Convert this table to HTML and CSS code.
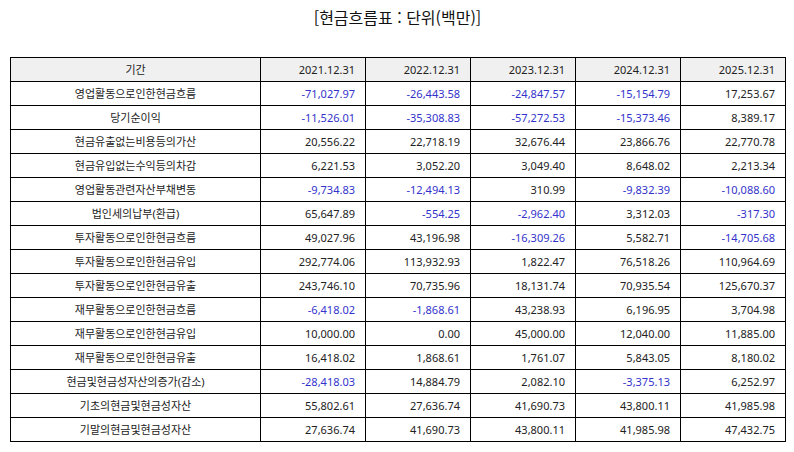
FILE: index.html
```html
<!DOCTYPE html>
<html lang="ko">
<head>
<meta charset="utf-8">
<title>현금흐름표</title>
<link rel="stylesheet" href="styles.css">
</head>
<body>
<div class="page">
  <h1 class="title">[현금흐름표 : 단위(백만)]</h1>
  <table class="cf">
    <colgroup>
      <col class="c-label"><col class="c-num"><col class="c-num"><col class="c-num"><col class="c-num"><col class="c-num">
    </colgroup>
    <thead>
      <tr><th class="lbl">기간</th><th>2021.12.31</th><th>2022.12.31</th><th>2023.12.31</th><th>2024.12.31</th><th>2025.12.31</th></tr>
    </thead>
    <tbody>
      <tr><td class="lbl">영업활동으로인한현금흐름</td><td class="neg">-71,027.97</td><td class="neg">-26,443.58</td><td class="neg">-24,847.57</td><td class="neg">-15,154.79</td><td>17,253.67</td></tr>
      <tr><td class="lbl">당기순이익</td><td class="neg">-11,526.01</td><td class="neg">-35,308.83</td><td class="neg">-57,272.53</td><td class="neg">-15,373.46</td><td>8,389.17</td></tr>
      <tr><td class="lbl">현금유출없는비용등의가산</td><td>20,556.22</td><td>22,718.19</td><td>32,676.44</td><td>23,866.76</td><td>22,770.78</td></tr>
      <tr><td class="lbl">현금유입없는수익등의차감</td><td>6,221.53</td><td>3,052.20</td><td>3,049.40</td><td>8,648.02</td><td>2,213.34</td></tr>
      <tr><td class="lbl">영업활동관련자산부채변동</td><td class="neg">-9,734.83</td><td class="neg">-12,494.13</td><td>310.99</td><td class="neg">-9,832.39</td><td class="neg">-10,088.60</td></tr>
      <tr><td class="lbl">법인세의납부(환급)</td><td>65,647.89</td><td class="neg">-554.25</td><td class="neg">-2,962.40</td><td>3,312.03</td><td class="neg">-317.30</td></tr>
      <tr><td class="lbl">투자활동으로인한현금흐름</td><td>49,027.96</td><td>43,196.98</td><td class="neg">-16,309.26</td><td>5,582.71</td><td class="neg">-14,705.68</td></tr>
      <tr><td class="lbl">투자활동으로인한현금유입</td><td>292,774.06</td><td>113,932.93</td><td>1,822.47</td><td>76,518.26</td><td>110,964.69</td></tr>
      <tr><td class="lbl">투자활동으로인한현금유출</td><td>243,746.10</td><td>70,735.96</td><td>18,131.74</td><td>70,935.54</td><td>125,670.37</td></tr>
      <tr><td class="lbl">재무활동으로인한현금흐름</td><td class="neg">-6,418.02</td><td class="neg">-1,868.61</td><td>43,238.93</td><td>6,196.95</td><td>3,704.98</td></tr>
      <tr><td class="lbl">재무활동으로인한현금유입</td><td>10,000.00</td><td>0.00</td><td>45,000.00</td><td>12,040.00</td><td>11,885.00</td></tr>
      <tr><td class="lbl">재무활동으로인한현금유출</td><td>16,418.02</td><td>1,868.61</td><td>1,761.07</td><td>5,843.05</td><td>8,180.02</td></tr>
      <tr><td class="lbl">현금및현금성자산의증가(감소)</td><td class="neg">-28,418.03</td><td>14,884.79</td><td>2,082.10</td><td class="neg">-3,375.13</td><td>6,252.97</td></tr>
      <tr><td class="lbl">기초의현금및현금성자산</td><td>55,802.61</td><td>27,636.74</td><td>41,690.73</td><td>43,800.11</td><td>41,985.98</td></tr>
      <tr><td class="lbl">기말의현금및현금성자산</td><td>27,636.74</td><td>41,690.73</td><td>43,800.11</td><td>41,985.98</td><td>47,432.75</td></tr>
    </tbody>
  </table>
</div>
</body>
</html>
```

FILE: styles.css
```css
html, body {
  margin: 0;
  padding: 0;
  background: #ffffff;
}

body {
  font-family: "Noto Sans", "Noto Sans CJK KR", sans-serif;
  color: #222222;
}

.page {
  padding: 6px 9px 0 10px;
}

.title {
  margin: 0;
  font-family: "Noto Sans CJK KR", sans-serif;
  font-size: 16px;
  font-weight: 400;
  line-height: 22px;
  text-align: center;
  color: #111111;
}

.cf {
  margin-top: 29px;
  width: 775px;
  border-collapse: collapse;
  table-layout: fixed;
  font-size: 11px;
}

.c-label { width: 250px; }
.c-num { width: 105px; }

.cf th,
.cf td {
  border: 1px solid #000000;
  height: 24px;
  padding: 0 10px 0 4px;
  text-align: right;
  white-space: nowrap;
  line-height: 14px;
  box-sizing: border-box;
}

.cf th {
  background: #f0f0f0;
  font-weight: 400;
}

.cf .lbl {
  text-align: center;
  padding: 0 4px;
}

.cf .neg {
  color: #3333cc;
}
```
